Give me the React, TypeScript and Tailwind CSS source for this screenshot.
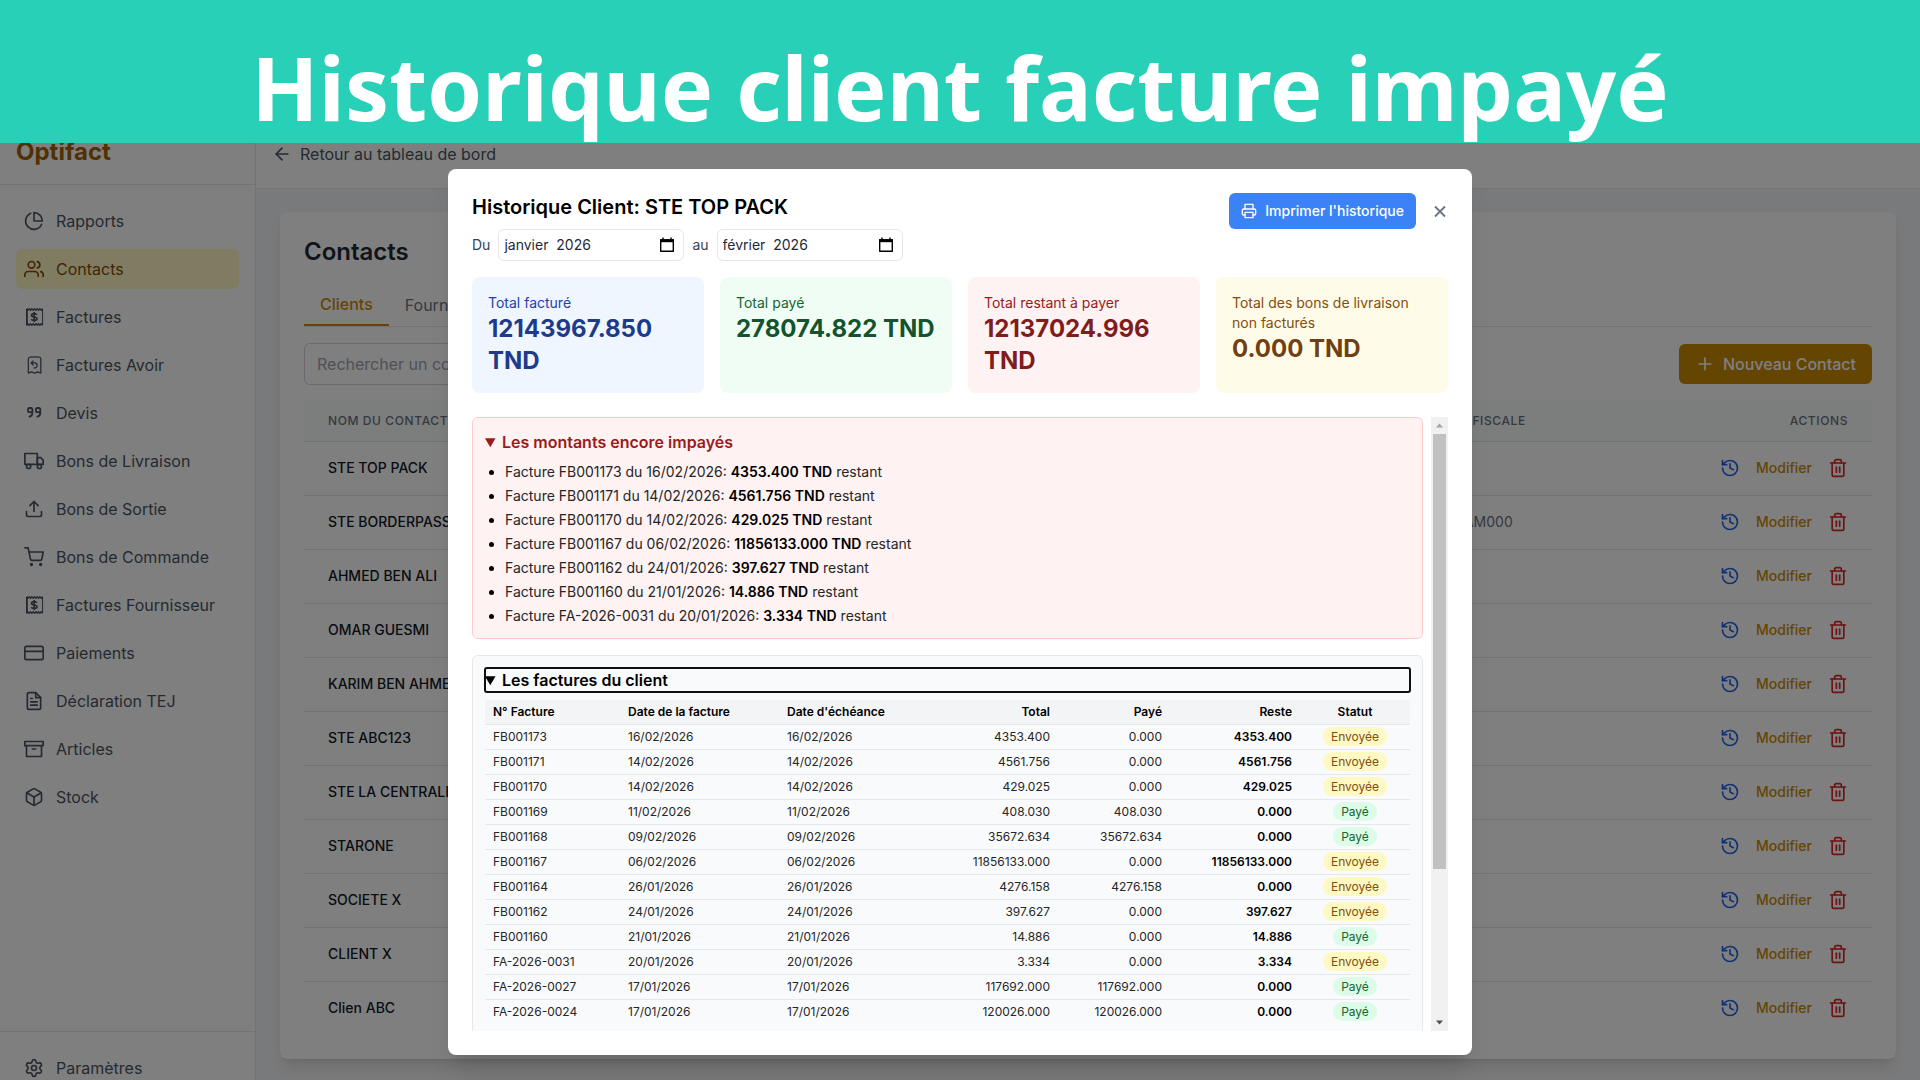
import type { ReactNode } from "react";
import { useState } from "react";
import {
  FiArchive,
  FiArrowLeft,
  FiBox,
  FiCreditCard,
  FiFileText,
  FiPieChart,
  FiPlus,
  FiPrinter,
  FiShoppingCart,
  FiTruck,
  FiUpload,
  FiUsers,
} from "react-icons/fi";
import { History, Settings, Trash2 } from "lucide-react";

type Invoice = {
  num: string;
  date: string;
  total: string;
  paye: string;
  reste: string;
  statut: "Envoyée" | "Payé";
};

const INVOICES: Invoice[] = [
  { num: "FB001173", date: "16/02/2026", total: "4353.400", paye: "0.000", reste: "4353.400", statut: "Envoyée" },
  { num: "FB001171", date: "14/02/2026", total: "4561.756", paye: "0.000", reste: "4561.756", statut: "Envoyée" },
  { num: "FB001170", date: "14/02/2026", total: "429.025", paye: "0.000", reste: "429.025", statut: "Envoyée" },
  { num: "FB001169", date: "11/02/2026", total: "408.030", paye: "408.030", reste: "0.000", statut: "Payé" },
  { num: "FB001168", date: "09/02/2026", total: "35672.634", paye: "35672.634", reste: "0.000", statut: "Payé" },
  { num: "FB001167", date: "06/02/2026", total: "11856133.000", paye: "0.000", reste: "11856133.000", statut: "Envoyée" },
  { num: "FB001164", date: "26/01/2026", total: "4276.158", paye: "4276.158", reste: "0.000", statut: "Envoyée" },
  { num: "FB001162", date: "24/01/2026", total: "397.627", paye: "0.000", reste: "397.627", statut: "Envoyée" },
  { num: "FB001160", date: "21/01/2026", total: "14.886", paye: "0.000", reste: "14.886", statut: "Payé" },
  { num: "FA-2026-0031", date: "20/01/2026", total: "3.334", paye: "0.000", reste: "3.334", statut: "Envoyée" },
  { num: "FA-2026-0027", date: "17/01/2026", total: "117692.000", paye: "117692.000", reste: "0.000", statut: "Payé" },
  { num: "FA-2026-0024", date: "17/01/2026", total: "120026.000", paye: "120026.000", reste: "0.000", statut: "Payé" },
];

const CONTACTS = [
  { name: "STE TOP PACK", fiscale: "" },
  { name: "STE BORDERPASS", fiscale: "1234567MAM000" },
  { name: "AHMED BEN ALI", fiscale: "" },
  { name: "OMAR GUESMI", fiscale: "" },
  { name: "KARIM BEN AHMED", fiscale: "" },
  { name: "STE ABC123", fiscale: "" },
  { name: "STE LA CENTRALE", fiscale: "" },
  { name: "STARONE", fiscale: "" },
  { name: "SOCIETE X", fiscale: "" },
  { name: "CLIENT X", fiscale: "" },
  { name: "Clien ABC", fiscale: "" },
];

function ReceiptIcon() {
  return (
    <svg viewBox="0 0 24 24" className="size-5" fill="none" stroke="currentColor" strokeWidth="1.8">
      <path d="M3.5 2v20" strokeWidth="2.2" />
      <path d="M22.3 2v20" strokeWidth="1.2" />
      <path d="M3 2.2l1.6 1.6 1.6-1.6 1.6 1.6 1.6-1.6 1.6 1.6 1.6-1.6 1.6 1.6 1.6-1.6 1.6 1.6 1.6-1.6 1.6 1.6 1.6-1.6" />
      <path d="M3 21.8l1.6-1.6 1.6 1.6 1.6-1.6 1.6 1.6 1.6-1.6 1.6 1.6 1.6-1.6 1.6 1.6 1.6-1.6 1.6 1.6 1.6-1.6 1.6 1.6" />
      <path
        d="M15.5 9.3c-.5-1-1.7-1.4-3.3-1.4-1.9 0-3.2.7-3.2 2s1.3 1.9 3.2 2.100c2 .2 3.400.8 3.400 2.200s-1.400 2-3.400 2c-1.700 0-3-.5-3.500-1.600M12.200 6v12"
        strokeWidth="2"
      />
    </svg>
  );
}

function RefundIcon() {
  return (
    <svg viewBox="0 0 24 24" className="size-5" fill="none" stroke="currentColor" strokeWidth="1.5" strokeLinecap="round" strokeLinejoin="round">
      <path d="M8.5 9.5L11 7M8.5 9.5L11 12M8.5 9.5h4.200a3 3 0 010 6h-.7" />
      <path d="M20.200 21.700V4.800c0-1.100-.8-2.100-1.900-2.200a48.500 48.500 0 00-11.200 0c-1.100.1-1.900 1.100-1.900 2.200v16.900l3.700-1.500 3.800 1.500 3.800-1.500z" />
    </svg>
  );
}

function QuoteIcon() {
  return (
    <svg viewBox="0 0 24 24" className="size-5" fill="none" stroke="currentColor" strokeWidth="2.2" strokeLinecap="round" strokeLinejoin="round">
      <path d="M10 11H6.200a1.400 1.400 0 01-1.400-1.400V7.400A1.400 1.400 0 016.200 6h2.400A1.400 1.400 0 0110 7.400V12c0 2.400-1 3.800-3.400 4.400" />
      <path d="M19.500 11h-3.800a1.400 1.400 0 01-1.400-1.400V7.400A1.400 1.400 0 0115.700 6h2.400a1.400 1.400 0 011.400 1.400V12c0 2.400-1 3.800-3.400 4.400" />
    </svg>
  );
}

const NAV: { label: string; icon: ReactNode }[] = [
  { label: "Rapports", icon: <FiPieChart className="size-5" /> },
  { label: "Contacts", icon: <FiUsers className="size-5" /> },
  { label: "Factures", icon: <ReceiptIcon /> },
  { label: "Factures Avoir", icon: <RefundIcon /> },
  { label: "Devis", icon: <QuoteIcon /> },
  { label: "Bons de Livraison", icon: <FiTruck className="size-5" /> },
  { label: "Bons de Sortie", icon: <FiUpload className="size-5" /> },
  { label: "Bons de Commande", icon: <FiShoppingCart className="size-5" /> },
  { label: "Factures Fournisseur", icon: <ReceiptIcon /> },
  { label: "Paiements", icon: <FiCreditCard className="size-5" /> },
  { label: "Déclaration TEJ", icon: <FiFileText className="size-5" /> },
  { label: "Articles", icon: <FiArchive className="size-5" /> },
  { label: "Stock", icon: <FiBox className="size-5" /> },
];

function NavLink({ label, icon, active }: { label: string; icon: ReactNode; active?: boolean }) {
  return (
    <a
      href="#"
      className={
        active
          ? "flex h-10 items-center gap-3 rounded-md bg-[#fef9c3] px-2 text-[#854d0e]"
          : "flex h-10 items-center gap-3 rounded-md px-2 text-[#4b5563]"
      }
    >
      {icon}
      {label}
    </a>
  );
}

function Sidebar() {
  return (
    <aside className="flex w-64 shrink-0 flex-col border-r border-[#e5e7eb] bg-white">
      <div className="flex h-[66px] shrink-0 items-center border-b border-[#e5e7eb] px-4 text-2xl font-bold text-[#a16207]">
        Optifact
      </div>
      <nav className="flex flex-1 flex-col gap-2 p-4">
        {NAV.map((n) => (
          <NavLink key={n.label} {...n} active={n.label === "Contacts"} />
        ))}
      </nav>
      <div className="border-t border-[#e5e7eb] p-4">
        <NavLink label="Paramètres" icon={<Settings className="size-5" />} />
      </div>
    </aside>
  );
}

function ContactsPage() {
  return (
    <div className="flex min-w-0 flex-1 flex-col bg-[#f3f4f6]">
      <header className="flex h-[70px] shrink-0 items-center border-b border-[#e5e7eb] bg-white px-4">
        <a href="#" className="flex items-center gap-2 text-[#4b5563]">
          <FiArrowLeft className="size-5" />
          Retour au tableau de bord
        </a>
      </header>
      <main className="px-6 pt-[23px]">
        <section className="rounded-lg bg-white p-6 shadow-lg">
          <h1 className="mb-4 text-2xl font-semibold text-[#1f2937]">Contacts</h1>
          <div className="mb-4 flex border-b border-[#e5e7eb]">
            <button className="border-b-2 border-[#ca8a04] px-4 py-2 font-medium text-[#ca8a04]">Clients</button>
            <button className="px-4 py-2 text-[#6b7280]">Fournisseurs</button>
          </div>
          <div className="mb-4 flex items-center justify-between">
            <input
              type="text"
              aria-label="Rechercher un contact"
              placeholder="Rechercher un contact..."
              className="w-1/3 rounded-md border border-[#d1d5db] px-3 py-2 placeholder:text-[#9ca3af]"
            />
            <button className="flex items-center gap-2 rounded-md bg-[#ca8a04] px-4 py-2 font-medium text-white">
              <FiPlus className="size-5" />
              Nouveau Contact
            </button>
          </div>
          <table className="w-full table-fixed text-left text-sm">
            <thead>
              <tr className="h-10 border-b border-[#e5e7eb] bg-[#f9fafb] text-xs tracking-wider text-[#6b7280] uppercase">
                <th className="w-[68%] px-6 font-medium">Nom du contact</th>
                <th className="w-[16%] px-6 font-medium">Matricule fiscale</th>
                <th className="w-[16%] px-6 text-right font-medium">Actions</th>
              </tr>
            </thead>
            <tbody className="divide-y divide-[#e5e7eb]">
              {CONTACTS.map((c) => (
                <tr key={c.name} className="h-[54px]">
                  <td className="px-6 font-medium text-[#111827]">{c.name}</td>
                  <td className="px-6 text-[#6b7280]">{c.fiscale}</td>
                  <td className="px-6">
                    <div className="flex items-center justify-end gap-4 font-medium">
                      <button aria-label="Historique" className="text-[#2563eb]">
                        <History className="size-5" />
                      </button>
                      <button className="text-[#ca8a04]">Modifier</button>
                      <button aria-label="Supprimer" className="text-[#dc2626]">
                        <Trash2 className="size-5" />
                      </button>
                    </div>
                  </td>
                </tr>
              ))}
            </tbody>
          </table>
        </section>
      </main>
    </div>
  );
}

function MonthField({ label, initial }: { label: string; initial: string }) {
  const [value, setValue] = useState(initial);
  return (
    <label className="flex items-center gap-2 text-sm text-[#374151]">
      {label}
      <span className="flex h-8 w-[186px] items-center rounded-md border border-[#e5e7eb] px-[5px] text-black">
        <input
          type="text"
          value={value}
          onChange={(e) => setValue(e.target.value)}
          className="min-w-0 flex-1 text-[#1f2937] outline-none"
        />
        <svg viewBox="0 0 16 16" className="mr-[3px] size-4" fill="none" stroke="currentColor">
          <path d="M1.7 3h12.6v11.3H1.7z" strokeWidth="1.4" strokeLinejoin="round" />
          <path d="M1 2.200h14v3H1z" fill="currentColor" stroke="none" />
          <path d="M4 .5v2M12 .5v2" strokeWidth="1.4" />
        </svg>
      </span>
    </label>
  );
}

function StatCard({ label, value, card, strong }: { label: string; value: string; card: string; strong: string }) {
  return (
    <div className={"rounded-lg p-4 " + card}>
      <div className="text-sm">{label}</div>
      <div className={"text-2xl font-bold " + strong}>{value}</div>
    </div>
  );
}

// Classic scrollbar: arrow, thumb at the top of its track, arrow
function Scrollbar() {
  return (
    <div className="flex w-[17px] shrink-0 flex-col bg-[#f1f1f1]" aria-hidden="true">
      <svg viewBox="0 0 17 17" className="size-[17px]">
        <path d="M5 10.5l3.5-4 3.5 4z" fill="#a3a3a3" />
      </svg>
      <div className="flex-1">
        <div className="mx-[2px] h-3/4 bg-[#c1c1c1]" />
      </div>
      <svg viewBox="0 0 17 17" className="size-[17px]">
        <path d="M5 6.5l3.5 4 3.5-4z" fill="#505050" />
      </svg>
    </div>
  );
}

function InvoiceTable() {
  return (
    <table className="mt-2 w-full table-fixed text-left text-xs">
      <thead className="bg-[#f3f4f6]">
        <tr className="border-b border-[#e5e7eb]">
          <th className="w-[135px] px-2 py-1 font-semibold">N° Facture</th>
          <th className="w-[159px] px-2 py-1 font-semibold">Date de la facture</th>
          <th className="px-2 py-1 font-semibold">Date d'échéance</th>
          <th className="w-[140px] px-2 py-1 text-right font-semibold">Total</th>
          <th className="w-[112px] px-2 py-1 text-right font-semibold">Payé</th>
          <th className="w-[130px] px-2 py-1 text-right font-semibold">Reste</th>
          <th className="w-[110px] px-2 py-1 text-center font-semibold">Statut</th>
        </tr>
      </thead>
      <tbody>
        {INVOICES.map((f) => (
          <tr key={f.num} className="border-b border-[#e5e7eb] text-neutral-800 last:border-b-0">
            <td className="px-2 py-1">{f.num}</td>
            <td className="px-2 py-1">{f.date}</td>
            <td className="px-2 py-1">{f.date}</td>
            <td className="px-2 py-1 text-right">{f.total}</td>
            <td className="px-2 py-1 text-right">{f.paye}</td>
            <td className="px-2 py-1 text-right font-semibold text-black">{f.reste}</td>
            <td className="px-2 py-1 text-center">
              <span
                className={
                  f.statut === "Payé"
                    ? "rounded-full bg-[#dcfce7] px-2 py-0.5 text-[#166534]"
                    : "rounded-full bg-[#fef9c3] px-2 py-0.5 text-[#854d0e]"
                }
              >
                {f.statut}
              </span>
            </td>
          </tr>
        ))}
      </tbody>
    </table>
  );
}

function HistoryModal() {
  const unpaid = INVOICES.filter((f) => f.reste !== "0.000");
  return (
    <div
      role="dialog"
      aria-label="Historique client"
      className="flex h-full w-full max-w-5xl flex-col rounded-lg bg-white p-6 text-black shadow-xl"
    >
      <div className="mb-4 flex items-start justify-between">
        <div>
          <h2 className="text-xl font-semibold">Historique Client: STE TOP PACK</h2>
          <div className="mt-2 flex items-center gap-2">
            <MonthField label="Du" initial={"janvier \u00a02026"} />
            <MonthField label="au" initial={"février \u00a02026"} />
          </div>
        </div>
        <div className="flex items-center gap-4">
          <button className="flex items-center gap-2 rounded-md bg-[#3b82f6] px-3 py-2 text-sm font-medium text-white">
            <FiPrinter className="size-4" />
            Imprimer l'historique
          </button>
          <button aria-label="Fermer" className="text-[#6b7280]">
            <svg viewBox="0 0 16 16" className="size-4" fill="none" stroke="currentColor" strokeWidth="1.8">
              <path d="M3 3.5l10 10M13 3.5l-10 10" />
            </svg>
          </button>
        </div>
      </div>

      <div className="mb-6 grid grid-cols-4 gap-4">
        <StatCard label="Total facturé" value="12143967.850 TND" card="bg-[#eff6ff] text-[#1e40af]" strong="text-[#1e3a8a]" />
        <StatCard label="Total payé" value="278074.822 TND" card="bg-[#f0fdf4] text-[#166534]" strong="text-[#14532d]" />
        <StatCard label="Total restant à payer" value="12137024.996 TND" card="bg-[#fef2f2] text-[#991b1b]" strong="text-[#7f1d1d]" />
        <StatCard label="Total des bons de livraison non facturés" value="0.000 TND" card="bg-[#fefce8] text-[#854d0e]" strong="text-[#713f12]" />
      </div>

      <div className="flex min-h-0 flex-1 gap-2">
        <div className="min-w-0 flex-1 overflow-hidden">
          <details open className="rounded-md border border-[#fecaca] bg-[#fef2f2] p-3">
            <summary className="font-semibold text-[#991b1b]">Les montants encore impayés</summary>
            <ul className="mt-2 list-disc space-y-1 pl-5 text-sm">
              {unpaid.map((f) => (
                <li key={f.num} className="text-neutral-800 marker:text-black">
                  Facture {f.num} du {f.date}: <span className="font-semibold text-black">{f.reste} TND</span> restant
                </li>
              ))}
            </ul>
          </details>
          <details open className="mt-4 rounded-md border border-[#e5e7eb] bg-[#f9fafb] p-3">
            <summary className="rounded-xs font-semibold outline-2 -outline-offset-1 outline-[#101010]">
              Les factures du client
            </summary>
            <InvoiceTable />
          </details>
        </div>
        <Scrollbar />
      </div>
    </div>
  );
}

export default function App() {
  return (
    <div className="flex h-screen flex-col overflow-hidden font-['Inter',sans-serif]">
      <div className="flex h-[143px] shrink-0 items-end justify-center bg-[#27d0b6] font-['Noto_Sans',sans-serif] text-[88px] leading-[112px] font-bold text-white">
        Historique client facture impayé
      </div>
      <div className="relative min-h-0 flex-1 overflow-hidden">
        <div className="-my-6 flex h-[calc(100%+48px)]">
          <Sidebar />
          <ContactsPage />
        </div>
        <div className="absolute inset-0 flex justify-center bg-black/50 pt-[26px] pb-[25px]">
          <HistoryModal />
        </div>
      </div>
    </div>
  );
}
